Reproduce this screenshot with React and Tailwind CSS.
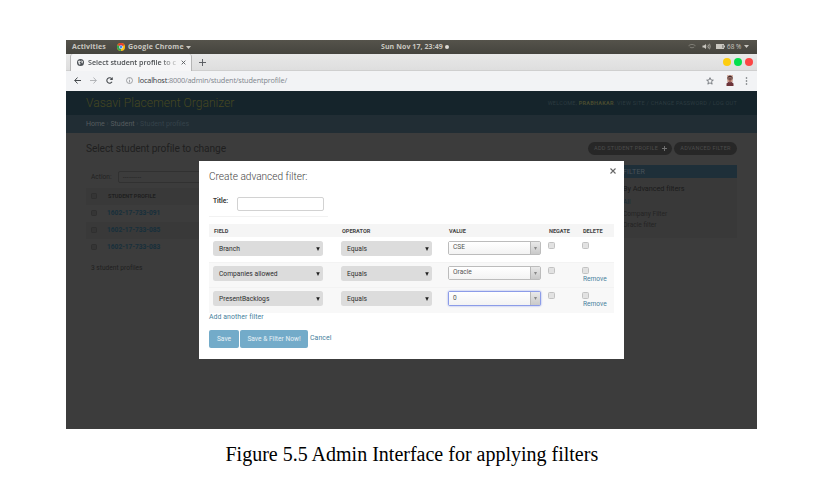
import React from "react";

const ROBOTO = "font-['Roboto','Liberation_Sans',sans-serif]";
const UBUNTU = "font-['Open_Sans','Noto_Sans',sans-serif]";

function SystemBar() {
  return (
    <div className="flex h-[14px] shrink-0 items-center bg-linear-to-b from-[#55534b] to-[#45443e] text-[7px] font-bold whitespace-nowrap text-[#c9c7c0]">
      <span className="ml-[6px] w-[45px] tracking-[0.130px]">Activities</span>
      <svg className="h-[8px] w-[8px]" viewBox="0 0 24 24">
        <circle cx="12" cy="12" r="12" fill="#fbc116" />
        <path d="M12 12L1.600 6A12 12 0 0 1 22.400 6Z" fill="#e33b2e" />
        <path d="M12 12L1.600 6A12 12 0 0 0 12 24Z" fill="#31a350" />
        <circle cx="12" cy="12" r="5.600" fill="#fff" />
        <circle cx="12" cy="12" r="4.400" fill="#4086f4" />
      </svg>
      <span className="ml-[3px] w-[58px] tracking-[0.180px]">Google Chrome</span>
      <svg className="h-[3px] w-[5px]" viewBox="0 0 5 3"><path d="M0 0H5L2.500 3Z" fill="#c9c7c0" /></svg>
      <span className="ml-[190px] w-[64px] tracking-[0.080px]">Sun Nov 17, 23:49</span>
      <span className="h-[4px] w-[4px] rounded-full bg-[#dddbd5]" />
      <div className="mr-[8px] ml-auto flex items-center">
        <svg className="h-[5px] w-[8px]" viewBox="0 0 16 10" fill="none" stroke="#8f8d86" strokeWidth="1.500">
          <path d="M1 3.500C5 0 11 0 15 3.500M3.500 6C6.500 8 9.500 8 12.500 6" />
        </svg>
        <svg className="ml-[6px] h-[7px] w-[9px]" viewBox="0 0 18 14" fill="none" stroke="#bbb9b2" strokeWidth="1.500">
          <path d="M1 5H4L8 2V12L4 9H1Z" fill="#c9c7c0" stroke="none" />
          <path d="M10 5Q11 7 10 9M12.500 3Q15 7 12.500 11M15 1.500Q18 7 15 12.500" />
        </svg>
        <svg className="ml-[5px] h-[5px] w-[9px]" viewBox="0 0 18 10" fill="#c9c7c0">
          <path d="M0 0H16V3H18V7H16V10H0Z" />
          <path d="M13 2H14.500V8H13Z" fill="#5b5952" />
        </svg>
        <span className="ml-[2px] w-[16px] text-[6.400px] font-medium">68 %</span>
        <svg className="ml-[1px] h-[3px] w-[5px]" viewBox="0 0 5 3"><path d="M0 0H5L2.500 3Z" fill="#c9c7c0" /></svg>
      </div>
    </div>
  );
}

function TabStrip() {
  return (
    <div className="flex h-[17px] shrink-0 items-center border-b border-[#cfcfcf] bg-linear-to-b from-[#e8e8e8] to-[#dedede] text-[#45484b]">
      <div className="ml-[4px] flex h-[17px] w-[122px] items-center rounded-t-[3px] border-x border-[#b5b5b5] bg-[#f6f6f7]">
        <svg className="ml-[6px] h-[7px] w-[7px]" viewBox="0 0 14 14">
          <circle cx="7" cy="7" r="7" fill="#4d5156" />
          <path d="M2 4L6 3L8 5L5 7L7 9L6 12L3 9ZM9 2L12 5L11 9L9 8Z" fill="#e6e7e8" />
        </svg>
        <span className="ml-[4px] w-[89px] overflow-hidden bg-linear-to-r from-[#45484b] from-80% to-[#d8d8d8] bg-clip-text text-[7.200px] leading-[12px] font-semibold tracking-[-0.020px] whitespace-nowrap text-transparent">
          Select student profile to c
        </span>
        <svg className="ml-[4px] h-[5px] w-[5px]" viewBox="0 0 8 8" stroke="#55585c" strokeWidth="1.400"><path d="M1 1L7 7M7 1L1 7" /></svg>
      </div>
      <svg className="ml-[7px] h-[7px] w-[7px]" viewBox="0 0 12 12" stroke="#55585c" strokeWidth="1.600"><path d="M6 0V12M0 6H12" /></svg>
      <div className="mr-[4px] ml-auto flex gap-[3px]">
        <span className="h-[8px] w-[8px] rounded-full bg-[#fdcd0f]" />
        <span className="h-[8px] w-[8px] rounded-full bg-[#05df4d]" />
        <span className="h-[8px] w-[8px] rounded-full bg-[#fc4544]" />
      </div>
    </div>
  );
}

function Toolbar() {
  return (
    <div className="flex h-[20px] shrink-0 items-center bg-[#f2f3f5] pb-[1px]">
      <svg className="ml-[8px] h-[7px] w-[7px]" viewBox="0 0 14 14" fill="none" stroke="#45494d" strokeWidth="2"><path d="M14 7H1.500M7 1L1.500 7L7 13" /></svg>
      <svg className="ml-[9px] h-[7px] w-[7px]" viewBox="0 0 14 14" fill="none" stroke="#a2a5a8" strokeWidth="1.600"><path d="M0 7H12.500M7 1L12.500 7L7 13" /></svg>
      <svg className="ml-[9px] h-[7px] w-[7px]" viewBox="0 0 14 14" fill="none" stroke="#45494d" strokeWidth="2.200"><path d="M12 9.500A5.500 5.500 0 1 1 11.500 3.500" /><path d="M13.500 0V6H7.500Z" fill="#45494d" stroke="none" /></svg>
      <svg className="ml-[13px] h-[7px] w-[7px]" viewBox="0 0 14 14" fill="none" stroke="#75797d" strokeWidth="1.300"><circle cx="7" cy="7" r="6" /><path d="M7 6V11M7 3V4.500" /></svg>
      <span className="ml-[5px] text-[7.300px] tracking-[-0.160px] whitespace-nowrap text-[#7f868d]">
        <span className="text-[#34383c]">localhost</span>:8000/admin/student/studentprofile/
      </span>
      <svg className="ml-auto h-[8px] w-[8px]" viewBox="0 0 24 24" fill="none" stroke="#606468" strokeWidth="2.300"><path d="M12 2L15 9L22 9.500L16.500 14L18.500 21.500L12 17.500L5.500 21.500L7.500 14L2 9.500L9 9Z" /></svg>
      <svg className="ml-[12px] h-[11px] w-[8px]" viewBox="0 0 16 22">
        <path d="M2 0H14V14H2Z" fill="#d9b7aa" />
        <path d="M3 10V4Q8 -2 13 4V10L11 5H5Z" fill="#40292c" />
        <path d="M5 5H11V12L8 15L5 12Z" fill="#a8695b" />
        <path d="M4 8H12" stroke="#33272b" strokeWidth="1.500" />
        <path d="M1 22V17L6 13L8 15L10 13L15 17V22Z" fill="#6d3439" />
      </svg>
      <svg className="mr-[9px] ml-[11px] h-[8px] w-[3px]" viewBox="0 0 3 8" fill="#606468"><circle cx="1.500" cy="1" r=".8" /><circle cx="1.500" cy="4" r=".8" /><circle cx="1.500" cy="7" r=".8" /></svg>
    </div>
  );
}

function DimCheckbox() {
  return <span className="-mt-[1px] ml-[5px] h-[6px] w-[6px] rounded-[1.500px] border border-[#2f2f2f] bg-[#353535]" />;
}

function AdminPage() {
  const profiles = ["1602-17-733-091", "1602-17-733-085", "1602-17-733-083"];
  return (
    <div className={`flex min-h-0 flex-1 flex-col bg-[#3c3c3c] whitespace-nowrap ${ROBOTO}`}>
      <div className="flex h-[24px] shrink-0 items-center justify-between bg-[#15242b] pr-[20px] pl-[20px]">
        <span className="text-[12.150px] font-light tracking-[-0.010px] text-[#454721]">Vasavi Placement Organizer</span>
        <span className="text-[5.570px] tracking-[0.235px] text-[#2c3b40]">
          WELCOME, <b className="text-[#484b30]">PRABHAKAR</b>. VIEW SITE / CHANGE PASSWORD / LOG OUT
        </span>
      </div>
      <div className="flex h-[18px] shrink-0 items-center bg-[#212d34] pl-[20px] text-[7px] text-[#35424a]">
        <span><span className="text-[#565c5f]">Home</span> › <span className="text-[#565c5f]">Student</span> › Student profiles</span>
      </div>
      <div className="flex flex-1 pr-[20px] pl-[20px]">
        <div className="w-[400px]">
          <div className="mt-[9px] text-[10.200px] leading-[14px] tracking-[-0.110px] text-[#1f1f1f]">Select student profile to change</div>
          <div className="mt-[15px] flex h-[12px] items-center pl-[5px] text-[6.600px] text-[#222]">
            <span className="w-[27px] pt-[1px]">Action:</span>
            <span className="flex h-[12px] w-[110px] items-center rounded-[2px] border border-[#313131] pl-[4px] text-[5.500px] tracking-[0.540px] text-[#121212]">---------</span>
          </div>
          <div className="mt-[5px] flex h-[17px] items-center bg-[#393939] text-[5.570px] font-bold text-[#1f1f1f]">
            <DimCheckbox /><span className="ml-[11px]">STUDENT PROFILE</span>
          </div>
          {profiles.map((id, i) => (
            <div key={id} className={`flex h-[17px] items-center text-[6.580px] font-bold text-[#172f3b] ${i === 1 ? "bg-[#393939]" : ""}`}>
              <DimCheckbox /><span className="ml-[10px] pt-[1px] tracking-[0.020px]">{id}</span>
            </div>
          ))}
          <div className="mt-[2px] flex h-[20px] items-center pt-[1px] pl-[5px] text-[6.580px] tracking-[0.020px] text-[#202020]">3 student profiles</div>
        </div>
        <div className="ml-auto flex flex-col items-end">
          <div className="mt-[9px] flex gap-[2px] text-[5.570px] tracking-[0.250px] text-[#4c4c4c]">
            <span className="flex h-[13px] w-[84px] items-center rounded-full bg-[#272727] pl-[6px]">ADD STUDENT PROFILE
              <svg className="ml-[4px] h-[5px] w-[5px]" viewBox="0 0 5 5" stroke="#707070" strokeWidth="1"><path d="M2.500 0V5M0 2.500H5" /></svg>
            </span>
            <span className="flex h-[13px] w-[63px] items-center justify-center rounded-full bg-[#272727]">ADVANCED FILTER</span>
          </div>
          <div className="mt-[10px] w-[121px] bg-[#393939] pb-[6px]">
            <div className="flex h-[13px] items-center bg-[#1e2f39] pt-[1px] pl-[7px] text-[7px] tracking-[0.150px] text-[#485259]">FILTER</div>
            <div className="mt-[5px] pl-[7px] text-[7.300px] leading-[11px] tracking-[-0.050px] text-[#1b1b1b]">By Advanced filters</div>
            <div className="mt-[3px] pl-[7px] text-[6.600px] leading-[11.500px] text-[#242424]">
              <div className="text-[#182d37]">All</div><div>Company Filter</div><div>Oracle filter</div>
            </div>
          </div>
        </div>
      </div>
    </div>
  );
}

function NativeSelect({ children, width }) {
  return (
    <span className={`flex h-[15px] items-center justify-between rounded-[2.500px] bg-[#dcdcdc] px-[6px] pt-[1px] text-[6.700px] tracking-[0.010px] text-[#2e2e2e] ${width}`}>
      {children}
      <svg className="-mt-[1px] -mr-[3px] h-[4px] w-[4px]" viewBox="0 0 4 4"><path d="M.2 .2H3.800L2 4Z" fill="#222" /></svg>
    </span>
  );
}

function ValueSelect({ children, focused }) {
  return (
    <span className={`flex w-[93px] rounded-[2px] border bg-white text-[6.600px] text-[#555] ${focused ? "h-[15px] border-[#8c9ce8] shadow-[0_0_2px_#8c9ce8]" : "h-[14px] border-[#bcbcbc]"}`}>
      <span className="flex flex-1 items-center bg-linear-to-b from-white to-[#f3f3f3] pl-[4px]">{children}</span>
      <span className="flex w-[10px] items-center justify-center border-l border-[#b8b8b8] bg-linear-to-b from-[#e9e9e9] to-[#c9c9c9]">
        <svg className="h-[3px] w-[3px]" viewBox="0 0 3 3"><path d="M0 0H3L1.500 3Z" fill="#888" /></svg>
      </span>
    </span>
  );
}

function Checkbox() {
  return <span className="block h-[7px] w-[7px] rounded-[1.500px] border border-[#c2c2c2] bg-[#e2e2e2]" />;
}

const COLUMNS = "grid grid-cols-[128px_107px_101px_34px_1fr] pl-[4px]";

const rows = [
  { field: "Branch", value: "CSE", style: "h-[25px] bg-white pt-[4px]" },
  { field: "Companies allowed", value: "Oracle", removable: true, style: "h-[25px] bg-[#f8f8f8] border-t border-[#f3f3f3] pt-[3px]" },
  { field: "PresentBacklogs", value: "0", removable: true, focused: true, style: "h-[26px] bg-[#f8f8f8] border-t border-[#f3f3f3] pt-[3px]" },
];

function FilterDialog() {
  return (
    <div className={`absolute top-[121px] left-[133px] flex h-[198px] w-[425px] flex-col bg-white px-[10px] whitespace-nowrap ${ROBOTO}`}>
      <div className="flex h-[32px] items-start justify-between">
        <span className="mt-[9px] text-[10.150px] leading-[14px] font-light tracking-[-0.020px] text-[#444]">Create advanced filter:</span>
        <svg className="mt-[7px] -mr-[2px] h-[6px] w-[6px]" viewBox="0 0 6 6" stroke="#666" strokeWidth="1.100"><path d="M.5 .5L5.500 5.500M5.500 .5L.5 5.500" /></svg>
      </div>
      <div className="flex h-[24px] w-[119px] border-b border-[#f2f2f2] pl-[4px] text-[6.500px] font-bold text-[#3a3a3a]">
        <span className="mt-[4px] w-[24px] leading-[9px]">Title:</span>
        <span className="mt-[4px] h-[14px] w-[87px] rounded-[2px] border border-[#d2d2d2]" />
      </div>
      <div className={`${COLUMNS} mt-[7px] h-[13px] items-center bg-[#f5f5f5] pt-[1px] text-[5.570px] font-bold text-[#444]`}>
        <span className="pl-[1px]">FIELD</span><span className="pl-[1px]">OPERATOR</span><span className="pl-[1px]">VALUE</span><span>NEGATE</span><span>DELETE</span>
      </div>
      {rows.map((row) => (
        <div key={row.field} className={`${COLUMNS} items-start ${row.style}`}>
          <NativeSelect width="w-[110px]">{row.field}</NativeSelect>
          <NativeSelect width="w-[91px]">Equals</NativeSelect>
          <ValueSelect focused={row.focused}>{row.value}</ValueSelect>
          <span className="mt-[1px] -ml-[1px]"><Checkbox /></span>
          <span className="mt-[1px] -ml-[1px] text-[6.600px] leading-[10px] text-[#47819d]">
            <Checkbox />{row.removable && <span className="block pl-[1px]">Remove</span>}
          </span>
        </div>
      ))}
      <div className="text-[6.900px] leading-[8px] tracking-[0.080px] text-[#47819d]">Add another filter</div>
      <div className="mt-[9px] flex h-[18px] items-center text-[6.580px] text-[#e8f1f6]">
        <span className="flex h-[18px] w-[30px] items-center justify-center rounded-[2px] bg-[#73abc9] pt-[1px]">Save</span>
        <span className="ml-[1px] flex h-[18px] w-[68px] items-center justify-center rounded-[2px] bg-[#73abc9] pt-[1px] tracking-[0.020px]">Save &amp; Filter Now!</span>
        <span className="mb-[1px] ml-[2px] text-[6.900px] tracking-[0.080px] text-[#47819d]">Cancel</span>
      </div>
    </div>
  );
}

export default function App() {
  return (
    <main className="flex h-[487px] w-[825px] flex-col items-start overflow-hidden bg-white">
      <div className={`relative mt-[40px] ml-[66px] flex h-[389px] w-[691px] shrink-0 flex-col ${UBUNTU}`}>
        <SystemBar />
        <TabStrip />
        <Toolbar />
        <AdminPage />
        <FilterDialog />
      </div>
      <p className="mt-[13px] ml-[225.500px] font-['Liberation_Serif',serif] text-[20px] leading-[24px] whitespace-nowrap text-black">
        Figure 5.5 Admin Interface for applying filters
      </p>
    </main>
  );
}
